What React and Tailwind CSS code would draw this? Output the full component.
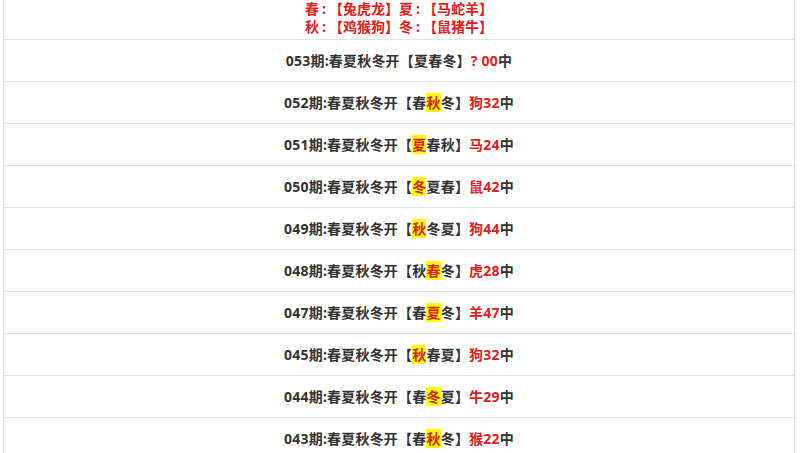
export default function App() {
  const rows = [
    { n: "053", pre: "", hl: "", post: "夏春冬", res: "? 00", special: true },
    { n: "052", pre: "春", hl: "秋", post: "冬", res: "狗32" },
    { n: "051", pre: "", hl: "夏", post: "春秋", res: "马24" },
    { n: "050", pre: "", hl: "冬", post: "夏春", res: "鼠42" },
    { n: "049", pre: "", hl: "秋", post: "冬夏", res: "狗44" },
    { n: "048", pre: "秋", hl: "春", post: "冬", res: "虎28" },
    { n: "047", pre: "春", hl: "夏", post: "冬", res: "羊47" },
    { n: "045", pre: "", hl: "秋", post: "春夏", res: "狗32" },
    { n: "044", pre: "春", hl: "冬", post: "夏", res: "牛29" },
    { n: "043", pre: "春", hl: "秋", post: "冬", res: "猴22" },
  ];
  const C = () => <span className="px-[3px]">:</span>;
  return (
    <div
      className="w-[800px] h-[453px] overflow-hidden bg-white"
      style={{ fontFamily: '"Noto Sans", "Noto Sans CJK SC", sans-serif' }}
    >
      <div className="mx-[3px] w-[792px] border-x border-[#e3e3e3]">
        <div className="h-[39px] flex flex-col items-center text-[14px] font-bold leading-[18px] text-[#e0201c]">
          <div>春<C />【兔虎龙】夏<C />【马蛇羊】</div>
          <div>秋<C />【鸡猴狗】冬<C />【鼠猪牛】</div>
        </div>
        {rows.map((r) => (
          <div
            key={r.n}
            className="h-[42px] border-t border-[#e3e3e3] flex items-center justify-center text-[14px] font-bold tracking-[0.2px] text-[#333333]"
          >
            <span>
              {r.n}期:春夏秋冬开【{r.pre}
              {r.hl && <span className="bg-[#ffff00] text-[#e0201c]">{r.hl}</span>}
              {r.post}】
              <span className="text-[#e0201c]">{r.res}</span>中
            </span>
          </div>
        ))}
      </div>
    </div>
  );
}
